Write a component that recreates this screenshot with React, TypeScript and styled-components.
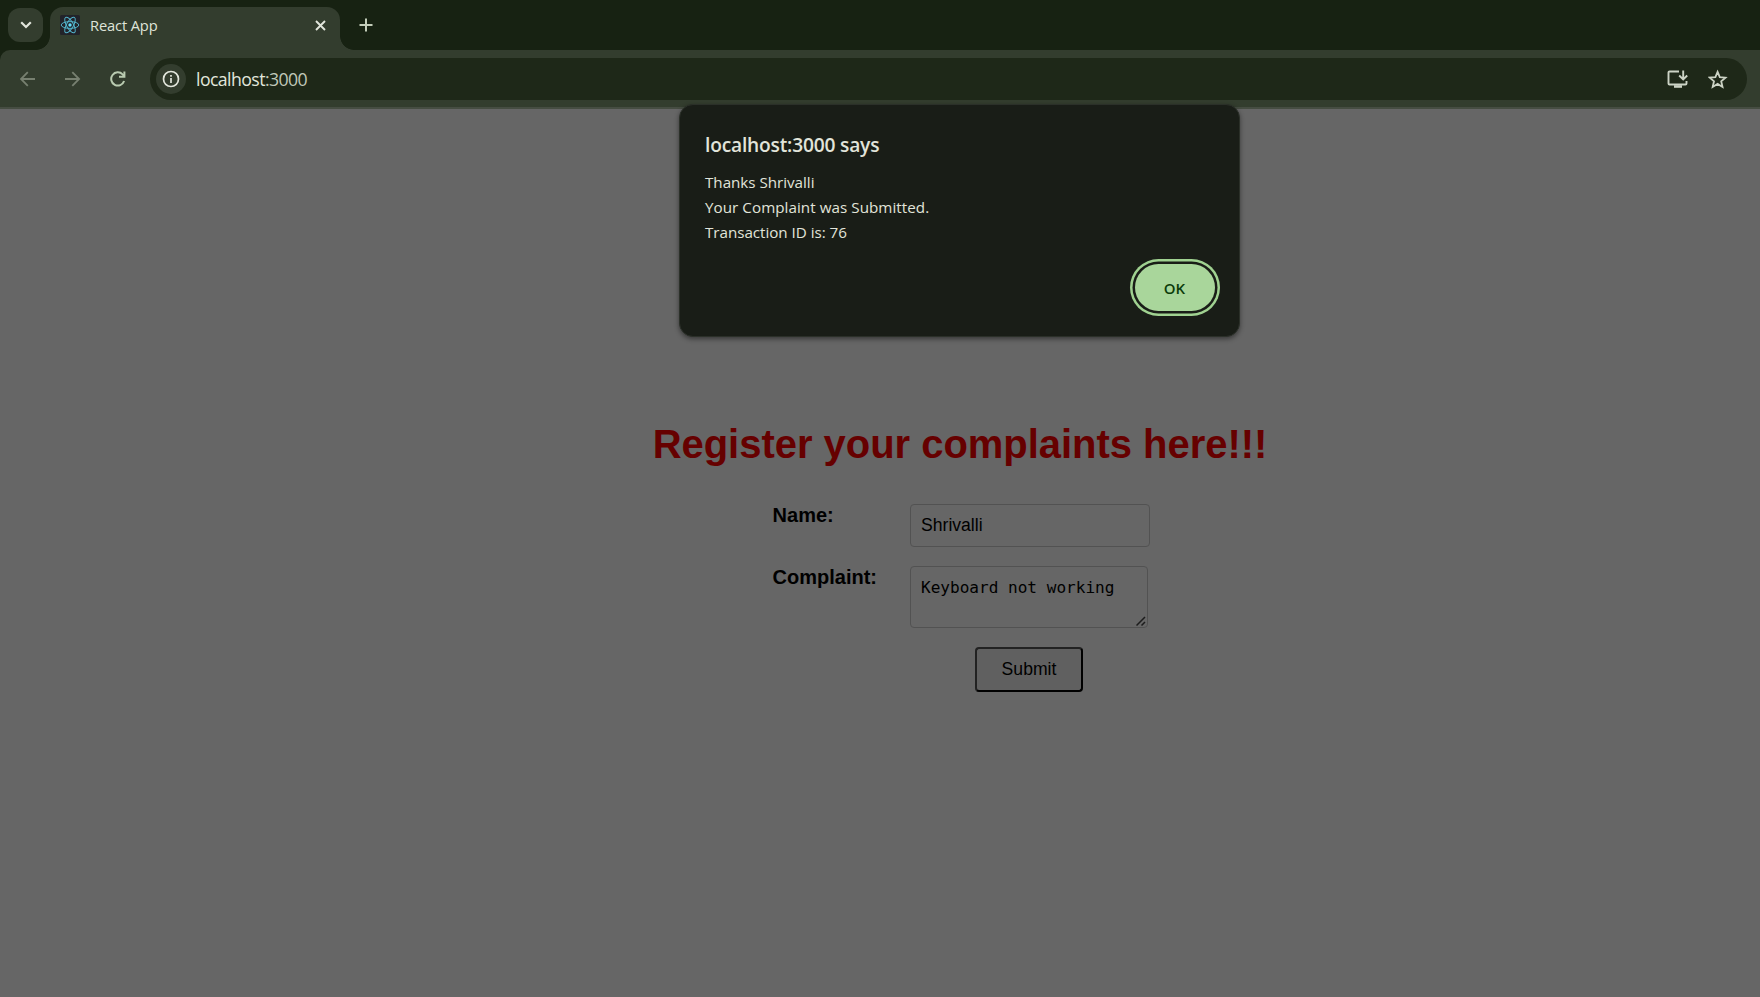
import React from 'react';
import styled, { createGlobalStyle } from 'styled-components';

const ui = '"Open Sans", "Noto Sans", sans-serif';
const arial = '"Liberation Sans", Arial, sans-serif';

const GlobalStyle = createGlobalStyle`
  *, *::before, *::after { box-sizing: border-box; }
  html, body { margin: 0; padding: 0; background: #666; overflow: hidden; }
`;

const Window = styled.div`
  position: relative;
  width: 1760px;
  height: 997px;
  overflow: hidden;
  display: flex;
  flex-direction: column;
  background: #666666;
`;

const TabStrip = styled.div`
  height: 50px;
  flex: none;
  display: flex;
  align-items: flex-start;
  padding: 7px 0 0 8px;
  background: #172212;
`;

const TabSearch = styled.button`
  width: 35px;
  height: 34px;
  margin: 1px 7px 0 0;
  padding: 0;
  border: 0;
  border-radius: 12px;
  background: #333d2e;
  display: flex;
  align-items: center;
  justify-content: center;
`;

const Tab = styled.div`
  position: relative;
  width: 290px;
  height: 43px;
  padding: 0 14px 7px 10px;
  display: flex;
  align-items: center;
  border-radius: 13px 13px 0 0;
  background: #333d2e;

  &::before, &::after {
    content: '';
    position: absolute;
    bottom: 0;
    width: 14px;
    height: 14px;
  }
  &::before {
    left: -14px;
    background: radial-gradient(circle at 0 0, transparent 13.5px, #333d2e 14.2px);
  }
  &::after {
    right: -14px;
    background: radial-gradient(circle at 100% 0, transparent 13.5px, #333d2e 14.2px);
  }
`;

const Favicon = styled.svg`
  display: block;
  margin-right: 10px;
`;

const TabTitle = styled.span`
  flex: 1;
  font: 400 14.7px/20px ${ui};
  letter-spacing: -0.15px;
  color: #dfe4d8;
`;

const Icon = styled.svg`
  display: block;
  flex: none;
`;

const NewTab = styled.div`
  margin: 11px 0 0 19px;
`;

const ToolbarBack = styled.div`
  height: 59px;
  flex: none;
  background: #172212;
`;

const Toolbar = styled.div`
  height: 59px;
  display: flex;
  align-items: flex-start;
  padding: 8px 13px 0 20px;
  background: #333d2e;
  border-bottom: 2px solid #464d42;
  border-top-left-radius: 10px;
`;

const NavButtons = styled.div`
  width: 130px;
  height: 41px;
  display: flex;
  align-items: center;
  gap: 29px;
`;

const Omnibox = styled.div`
  flex: 1;
  height: 42px;
  display: flex;
  align-items: center;
  padding: 0 19px 0 6px;
  border-radius: 21px;
  background: #1e2818;
`;

const SiteInfo = styled.div`
  width: 30px;
  height: 30px;
  margin-right: 10px;
  border-radius: 50%;
  background: #333d2e;
  display: flex;
  align-items: center;
  justify-content: center;
`;

const Url = styled.span`
  flex: 1;
  font: 400 17.7px/24px ${ui};
  letter-spacing: -0.58px;
  color: #e2e6dc;
`;

const Port = styled.span`
  color: #c0c8b8;
`;

const Actions = styled.div`
  display: flex;
  align-items: center;
  gap: 20px;
`;

const Page = styled.main`
  flex: 1;
  padding: 312px 0 0 160px;
  font-family: ${arial};
  color: #000;
`;

const Heading = styled.h1`
  margin: 0;
  text-align: center;
  width: 1600px;
  font-size: 40px;
  line-height: 46px;
  font-weight: 700;
  letter-spacing: -0.03px;
  color: #660000;
`;

const Form = styled.form`
  margin: 37px 0 0 612px;
  width: 378px;
  display: grid;
  grid-template-columns: 138px 240px;
  row-gap: 19px;
  align-items: start;
`;

const Label = styled.label`
  padding-left: 0.6px;
  font-size: 20px;
  line-height: 23px;
  font-weight: 700;
`;

const NameInput = styled.input`
  width: 240px;
  height: 43px;
  padding: 0 10px;
  border: 1px solid #525252;
  border-radius: 4px;
  background: #666;
  color: #000;
  font: 400 17.6px/20px ${arial};
  outline: 0;
`;

const AreaWrap = styled.div`
  position: relative;
  width: 238px;
  height: 62px;
`;

const Area = styled.textarea`
  display: block;
  width: 238px;
  height: 62px;
  padding: 10px;
  border: 1px solid #525252;
  border-radius: 4px;
  background: #666;
  color: #000;
  font: 400 16.07px/21px "DejaVu Sans Mono", monospace;
  resize: none;
  overflow: hidden;
  outline: 0;
  white-space: pre;
`;

const Grip = styled.svg`
  position: absolute;
  right: 2px;
  bottom: 2px;
`;

const Submit = styled.button`
  grid-column: 2;
  margin-left: 65px;
  width: 108px;
  height: 45px;
  padding: 0 0 2px;
  border: 2px solid;
  border-color: #222 #000 #000 #222;
  border-radius: 4px;
  background: #606060;
  color: #000;
  font: 400 17.6px/20px ${arial};
`;

const Dialog = styled.section`
  position: absolute;
  left: 679px;
  top: 104px;
  width: 561px;
  height: 233px;
  padding: 27px 20px 0 25px;
  display: flex;
  flex-direction: column;
  border: 1px solid #2b3029;
  border-radius: 14px;
  background: #191d17;
  box-shadow: 0 2px 5px rgba(0, 0, 0, 0.45);
  font-family: ${ui};
  color: #e1e4da;
`;

const DialogTitle = styled.h2`
  margin: 0 0 12px;
  font-size: 19.2px;
  line-height: 26px;
  font-weight: 600;
  letter-spacing: -0.2px;
`;

const Line = styled.p<{ $spacing: number }>`
  margin: 0;
  font-size: 15.2px;
  line-height: 25px;
  letter-spacing: ${p => p.$spacing}px;
`;

const OkButton = styled.button`
  align-self: flex-end;
  margin: 19px 4px 0 0;
  width: 80px;
  height: 47px;
  padding: 1px 1px 0 0;
  border: 0;
  border-radius: 24px;
  background: #a9d69b;
  box-shadow: 0 0 0 2.5px #191d17, 0 0 0 5px #a0d291;
  color: #0c3c0a;
  font: 600 15px/20px ${ui};
`;

export default function App() {
  return (
    <Window>
      <GlobalStyle />
      <TabStrip>
        <TabSearch aria-label="Search tabs">
          <Icon width="12" height="8" viewBox="0 0 12 8" fill="none" stroke="#e2e6dc" strokeWidth="2.2">
            <path d="M1.2 1.2 6 6l4.8-4.8" />
          </Icon>
        </TabSearch>
        <Tab>
          <Favicon width="20" height="20" viewBox="0 0 20 20">
            <rect width="20" height="20" rx="1.5" fill="#22232a" />
            <g fill="none" stroke="#53b6cf" strokeWidth="0.95">
              <ellipse cx="10" cy="10" rx="8.8" ry="3.4" />
              <ellipse cx="10" cy="10" rx="8.8" ry="3.4" transform="rotate(60 10 10)" />
              <ellipse cx="10" cy="10" rx="8.8" ry="3.4" transform="rotate(120 10 10)" />
            </g>
            <circle cx="10" cy="10" r="1.7" fill="#61dafb" />
          </Favicon>
          <TabTitle>React App</TabTitle>
          <Icon width="11" height="11" viewBox="0 0 11 11" stroke="#e2e6dc" strokeWidth="1.9">
            <path d="M1 1l9 9M10 1l-9 9" />
          </Icon>
        </Tab>
        <NewTab>
          <Icon width="14" height="14" viewBox="0 0 14 14" stroke="#c3cdb9" strokeWidth="2">
            <path d="M7 .5v13M.5 7h13" />
          </Icon>
        </NewTab>
      </TabStrip>
      <ToolbarBack>
        <Toolbar>
          <NavButtons>
            <Icon width="16" height="16" viewBox="0 0 16 16" fill="none" stroke="#778070" strokeWidth="1.8">
              <path d="M15 8H1.6M7.8 1.2 1 8l6.8 6.8" />
            </Icon>
            <Icon width="16" height="16" viewBox="0 0 16 16" fill="none" stroke="#778070" strokeWidth="1.8">
              <path d="M0 8h13.7M7.3 1.2 14.1 8l-6.8 6.8" />
            </Icon>
            <Icon width="16" height="16" viewBox="0 0 16 16" fill="none" stroke="#b9cbb0" strokeWidth="2">
              <path d="M14.1 10A6.6 6.6 0 1 1 12.6 3.4L14.2 5M14.4 .6v5.2H9" />
            </Icon>
          </NavButtons>
          <Omnibox>
            <SiteInfo>
              <Icon width="18" height="18" viewBox="0 0 18 18" fill="none" stroke="#e2e6dc" strokeWidth="1.7">
                <circle cx="9" cy="9" r="7.5" />
                <path d="M9 8v5M9 5v1.8" />
              </Icon>
            </SiteInfo>
            <Url>
              localhost<Port>:3000</Port>
            </Url>
            <Actions>
              <Icon width="21" height="20" viewBox="0 0 21 20" fill="none" stroke="#ccd3c5" strokeWidth="1.9">
                <path d="M12 2.5H2.5a1 1 0 0 0-1 1v11a1 1 0 0 0 1 1h16a1 1 0 0 0 1-1V12M16.2 1.5v8.3M12.2 6.5l4 4 4-4" />
                <path d="M7 16.2h8v2.6H7z" fill="#ccd3c5" stroke="none" />
              </Icon>
              <Icon width="20" height="20" viewBox="0 0 20 20" fill="none" stroke="#ccd3c5" strokeWidth="1.8">
                <path d="M9.6 2.8l2.2 5.3 5.7.5-4.3 3.7 1.3 5.6-4.9-3-4.9 3 1.3-5.6L1.7 8.6l5.7-.5z" />
              </Icon>
            </Actions>
          </Omnibox>
        </Toolbar>
      </ToolbarBack>
      <Page>
        <Heading>Register your complaints here!!!</Heading>
        <Form>
          <Label htmlFor="name">Name:</Label>
          <NameInput id="name" defaultValue="Shrivalli" />
          <Label htmlFor="complaint">Complaint:</Label>
          <AreaWrap>
            <Area id="complaint" defaultValue="Keyboard not working" spellCheck={false} />
            <Grip width="10" height="10" viewBox="0 0 10 10" stroke="#1c1c1c" strokeWidth="1.5">
              <path d="M.5 9.5l8.5-8.5M5.5 9.5l3.5-3.5" />
            </Grip>
          </AreaWrap>
          <Submit type="button">Submit</Submit>
        </Form>
      </Page>
      <Dialog role="alertdialog">
        <DialogTitle>localhost:3000 says</DialogTitle>
        <Line $spacing={-0.02}>Thanks Shrivalli</Line>
        <Line $spacing={0.05}>Your Complaint was Submitted.</Line>
        <Line $spacing={-0.03}>Transaction ID is: 76</Line>
        <OkButton>OK</OkButton>
      </Dialog>
    </Window>
  );
}
